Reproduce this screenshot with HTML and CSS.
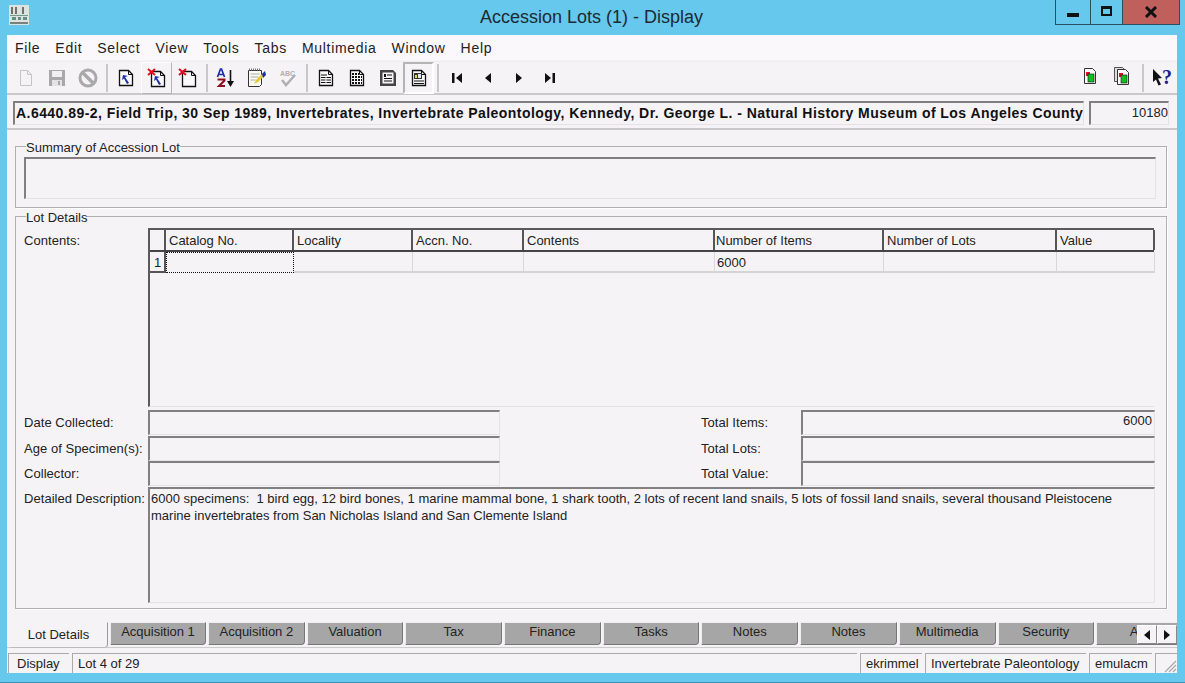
FILE: index.html
```html
<!DOCTYPE html>
<html>

<head>
  <meta charset="UTF-8">
  <title>Accession Lots (1) - Display</title>
  <link rel="stylesheet" href="styles.css">
</head>

<body>
  <header class="titlebar">
    <svg class="appicon" width="20" height="20" viewBox="0 0 20 20">
      <rect x="0" y="0" width="20" height="20" fill="#dfe3e0" />
      <rect x="2" y="2" width="2" height="7" fill="#6d7470" />
      <rect x="6" y="2" width="2" height="7" fill="#6d7470" />
      <rect x="13" y="2" width="2" height="7" fill="#6d7470" />
      <rect x="1" y="10" width="18" height="1" fill="#6f9a90" />
      <rect x="3" y="12" width="4" height="3" fill="#5f8f88" />
      <rect x="9" y="12" width="3" height="3" fill="#5f8f88" />
      <rect x="14" y="12" width="4" height="3" fill="#5f8f88" />
      <rect x="1" y="17" width="18" height="2" fill="#7a807c" />
    </svg>
    <div class="title">Accession Lots (1) - Display</div>
    <div class="winbtns">
      <div class="winbtn"><span class="glyph-min"></span></div>
      <div class="winbtn"><span class="glyph-max"></span></div>
      <div class="winbtn close">
        <svg width="14" height="12" viewBox="0 0 14 12"><path d="M2 1l10 10M12 1L2 11" stroke="#111" stroke-width="3" fill="none" /></svg>
      </div>
    </div>
  </header>

  <div class="window">
    <nav class="menubar">
      <span>File</span><span>Edit</span><span>Select</span><span>View</span><span>Tools</span><span>Tabs</span><span>Multimedia</span><span>Window</span><span>Help</span>
    </nav>

    <div class="toolbar">
      <div class="tool">
        <svg width="18" height="18" viewBox="0 0 18 18"><path d="M3.500 1.500h7l4 4v11h-11z" fill="#f6f3f7" stroke="#c4c4c4" /><path d="M10.500 1.500v4h4" fill="none" stroke="#c4c4c4" /></svg>
      </div>
      <div class="tool">
        <svg width="18" height="18" viewBox="0 0 18 18"><path d="M1 1h16v16H1z" fill="#a8a8a8" /><rect x="4" y="2" width="10" height="6" fill="#f0eef0" /><rect x="4" y="11" width="10" height="6" fill="#e4e2e4" /><rect x="10" y="12" width="2" height="4" fill="#a8a8a8" /></svg>
      </div>
      <div class="tool">
        <svg width="20" height="20" viewBox="0 0 20 20"><circle cx="10" cy="10" r="8" fill="none" stroke="#a9a9a9" stroke-width="3" /><path d="M4.500 4.500l11 11" stroke="#a9a9a9" stroke-width="3.500" /></svg>
      </div>
      <div class="sep"></div>
      <div class="tool">
        <svg width="18" height="18" viewBox="0 0 18 18"><use href="#doc" /><use href="#back" /></svg>
      </div>
      <div class="tool raised">
        <svg width="20" height="20" viewBox="0 0 20 20"><g transform="translate(2 2)"><use href="#doc" /><use href="#back" /></g><path d="M1 1l7 6M8 1L1 7" stroke="#e01020" stroke-width="2" /></svg>
      </div>
      <div class="tool">
        <svg width="20" height="20" viewBox="0 0 20 20"><g transform="translate(2 2)"><use href="#doc" /></g><path d="M1 1l7 6M8 1L1 7" stroke="#e01020" stroke-width="2" /></svg>
      </div>
      <div class="sep"></div>
      <div class="tool">
        <svg width="20" height="20" viewBox="0 0 20 20">
          <path d="M1.500 9L4.500 1h1l3 8M3 6.500h4" fill="none" stroke="#1a2fa8" stroke-width="1.700" />
          <path d="M1.500 11.500h7v1L3 18h6" fill="none" stroke="#8e1020" stroke-width="2" />
          <path d="M14.500 2v12" stroke="#111" stroke-width="1.600" /><path d="M11 13h7l-3.500 6z" fill="#111" />
        </svg>
      </div>
      <div class="tool">
        <svg width="22" height="20" viewBox="0 0 22 20">
          <path d="M2.500 2.500h13v14l-2 2h-11z" fill="#fbfbf4" stroke="#333" />
          <path d="M3 1.500h12" stroke="#777" stroke-width="2" stroke-dasharray="1 1" />
          <path d="M4.500 6h9M4.500 9h8M4.500 12h5" stroke="#aaa" />
          <path d="M8 16l2-4 8-8 2 2-8 8z" fill="#e6c832" />
          <path d="M16 6l3-3 1 4-3 3z" fill="#1a2fa8" />
        </svg>
      </div>
      <div class="tool">
        <svg width="20" height="20" viewBox="0 0 20 20">
          <text x="2" y="8" class="abc">ABC</text>
          <path d="M4 12l4 5 9-10" fill="none" stroke="#b0b0b0" stroke-width="2.500" />
        </svg>
      </div>
      <div class="sep"></div>
      <div class="tool">
        <svg width="18" height="18" viewBox="0 0 18 18"><use href="#doc" /><path d="M4 6h6M4 8.500h10M4 11h10M4 13.500h10" stroke="#111" stroke-width="1.200" /><path d="M9 8v6.500" stroke="#fafafa" /></svg>
      </div>
      <div class="tool">
        <svg width="18" height="18" viewBox="0 0 18 18"><use href="#doc" /><path d="M4 5h7M4 8h10M4 11h10M4 14h10" stroke="#111" stroke-width="2" stroke-dasharray="2 1" /></svg>
      </div>
      <div class="tool">
        <svg width="18" height="18" viewBox="0 0 18 18"><path d="M1 1h13l3 3v13H1z" fill="#444" /><rect x="3.500" y="3.500" width="11" height="11" fill="#f6f3f7" /><path d="M8 6h5M5 9.500h8M5 12h8" stroke="#111" stroke-width="1.200" /><rect x="5" y="5" width="2" height="3" fill="#111" /></svg>
      </div>
      <div class="tool pressed">
        <svg width="18" height="18" viewBox="0 0 18 18"><use href="#doc" /><rect x="4" y="4" width="8" height="6" fill="#333" /><rect x="5" y="6" width="2" height="3" fill="#e8d840" /><rect x="8" y="5" width="3" height="4" fill="#dfe8f0" /><path d="M4 12h10M4 14.500h10" stroke="#111" stroke-width="1.200" /></svg>
      </div>
      <div class="sep"></div>
      <div class="tool"><svg width="12" height="12" viewBox="0 0 12 12"><path d="M1 1h2.500v10H1zM11 1v10L5 6z" fill="#111" /></svg></div>
      <div class="tool"><svg width="12" height="12" viewBox="0 0 12 12"><path d="M9 1v10L3 6z" fill="#111" /></svg></div>
      <div class="tool"><svg width="12" height="12" viewBox="0 0 12 12"><path d="M3 1v10l6-5z" fill="#111" /></svg></div>
      <div class="tool"><svg width="12" height="12" viewBox="0 0 12 12"><path d="M1 1v10l6-5zM8.500 1H11v10H8.500z" fill="#111" /></svg></div>

      <div class="tool right lifted">
        <svg width="18" height="18" viewBox="0 0 18 18"><use href="#sheet" /></svg>
      </div>
      <div class="tool lifted">
        <svg width="20" height="20" viewBox="0 0 20 20"><path d="M2.500 1.500h8l3 3v11h-11z" fill="#ddd" stroke="#555" /><g transform="translate(3 2)"><use href="#sheet" /></g></svg>
      </div>
      <div class="sep"></div>
      <div class="tool">
        <svg width="24" height="22" viewBox="0 0 24 22">
          <path d="M3 2l9 9-4 .5 3 6-2.500 1-2.500-6L3 15z" fill="#111" />
          <text x="12" y="17" class="help-q">?</text>
        </svg>
      </div>
    </div>

    <div class="recordline">
      <div class="field recordname">A.6440.89-2, Field Trip, 30 Sep 1989, Invertebrates, Invertebrate Paleontology, Kennedy, Dr. George L. - Natural History Museum of Los Angeles County</div>
      <div class="field recordid">10180</div>
    </div>

    <main class="content">
      <fieldset class="group summary">
        <legend>Summary of Accession Lot</legend>
        <div class="field summarybox"></div>
      </fieldset>

      <fieldset class="group details">
        <legend>Lot Details</legend>
        <div class="contents-row">
          <label>Contents:</label>
          <div class="gridbox">
            <div class="gridhead">
              <div class="corner"></div>
              <div class="c1">Catalog No.</div>
              <div class="c2">Locality</div>
              <div class="c3">Accn. No.</div>
              <div class="c4">Contents</div>
              <div class="c5">Number of Items</div>
              <div class="c6">Number of Lots</div>
              <div class="c7">Value</div>
            </div>
            <div class="gridrow">
              <div class="corner">1</div>
              <div class="c1 current"></div>
              <div class="c2"></div>
              <div class="c3"></div>
              <div class="c4"></div>
              <div class="c5">6000</div>
              <div class="c6"></div>
              <div class="c7"></div>
            </div>
          </div>
        </div>

        <div class="pairs">
          <label>Date Collected:</label>
          <div class="field"></div>
          <label class="rlabel">Total Items:</label>
          <div class="field num">6000</div>

          <label>Age of Specimen(s):</label>
          <div class="field"></div>
          <label class="rlabel">Total Lots:</label>
          <div class="field num"></div>

          <label>Collector:</label>
          <div class="field"></div>
          <label class="rlabel">Total Value:</label>
          <div class="field num"></div>
        </div>

        <div class="desc-row">
          <label>Detailed Description:</label>
          <div class="field desc">6000 specimens:&nbsp; 1 bird egg, 12 bird bones, 1 marine mammal bone, 1 shark tooth, 2 lots of recent land snails, 5 lots of fossil land snails, several thousand Pleistocene marine invertebrates from San Nicholas Island and San Clemente Island</div>
        </div>
      </fieldset>
    </main>

    <div class="tabs">
      <div class="tab active">Lot Details</div>
      <div class="tab first">Acquisition 1</div>
      <div class="tab">Acquisition 2</div>
      <div class="tab">Valuation</div>
      <div class="tab">Tax</div>
      <div class="tab">Finance</div>
      <div class="tab">Tasks</div>
      <div class="tab">Notes</div>
      <div class="tab">Notes</div>
      <div class="tab">Multimedia</div>
      <div class="tab">Security</div>
      <div class="tab">Audit</div>
      <div class="tabscroll">
        <div><svg width="6" height="10" viewBox="0 0 6 10"><path d="M6 0v10L0 5z" fill="#111" /></svg></div>
        <div><svg width="6" height="10" viewBox="0 0 6 10"><path d="M0 0v10l6-5z" fill="#111" /></svg></div>
      </div>
    </div>

    <footer class="statusbar">
      <div class="cell mode">Display</div>
      <div class="cell lot">Lot 4 of 29</div>
      <div class="cell user">ekrimmel</div>
      <div class="cell dept">Invertebrate Paleontology</div>
      <div class="cell db">emulacm</div>
      <div class="cell grip">
        <svg width="14" height="14" viewBox="0 0 14 14"><path d="M13 2L2 13M13 6l-7 7M13 10l-3 3" stroke="#a8a8a8" stroke-width="1.200" /></svg>
      </div>
    </footer>
  </div>

  <svg class="defs" width="0" height="0">
    <defs>
      <g id="doc">
        <path d="M2.500 1.500h9l4 4v11h-13z" fill="#fafafa" stroke="#111" stroke-width="1.300" />
        <path d="M11.500 1.500v4h4" fill="none" stroke="#111" />
      </g>
      <path id="back" d="M12 14L8 8l3-1-5-1-1 5 2-1.500 3 5.500z" fill="#1a2fa8" />
      <g id="sheet">
        <path d="M2.500 1.500h8l3 3v12h-11z" fill="#fafafa" stroke="#333" />
        <rect x="4" y="5" width="4" height="4" fill="#e01020" />
        <rect x="6" y="7" width="6" height="8" fill="#10c020" stroke="#111" stroke-width=".6" />
      </g>
    </defs>
  </svg>
</body>

</html>
```
FILE: styles.css
```css
html,
body {
  margin: 0;
  height: 683px;
  overflow: hidden;
}

body {
  background-color: #66c8ec;
  font-family: "Liberation Sans", Arial, sans-serif;
  font-size: 13px;
  color: #222;
  box-sizing: border-box;
  border-bottom: 1px solid #3f8fae;
}

.titlebar {
  display: flex;
  height: 35px;
  position: relative;
}

.appicon {
  margin: 5px 0 0 9px;
}

.title {
  position: absolute;
  left: 480px;
  top: 7px;
  font-size: 18px;
  color: #1d2a33;
}

.winbtns {
  display: flex;
  margin-left: auto;
  margin-right: 5px;
  height: 24px;
  border: 1px solid #2a4f60;
  border-top: 0;
}

.winbtn {
  width: 31px;
  display: flex;
  align-items: center;
  justify-content: center;
  border-left: 1px solid #2a4f60;
}

.winbtn:first-child {
  width: 34px;
  border-left: 0;
}

.winbtn.close {
  width: 56px;
  background-color: #c0605c;
}

.glyph-min {
  display: block;
  width: 12px;
  height: 4px;
  margin-top: 6px;
  background-color: #111;
}

.glyph-max {
  display: block;
  width: 7px;
  height: 5px;
  border: 2px solid #111;
  border-top-width: 3px;
  margin-bottom: 3px;
}

.window {
  margin: 0 8px 0 7px;
  height: 638px;
  background-color: #f6f3f7;
  display: flex;
  flex-direction: column;
}

.menubar {
  display: flex;
  gap: 15px;
  height: 25px;
  padding: 0 0 0 8px;
  align-items: center;
  font-size: 14px;
  letter-spacing: .7px;
  background-color: #faf8fa;
  margin-bottom: 1px;
}

.toolbar {
  display: flex;
  align-items: center;
  height: 34px;
  padding-left: 3px;
  border-top: 1px solid #eee;
  border-bottom: 2px solid #c9c9c9;
  box-sizing: border-box;
}

.tool {
  width: 31px;
  height: 32px;
  display: flex;
  align-items: center;
  justify-content: center;
  box-sizing: border-box;
}

.tool svg {
  overflow: visible;
}

.tool.raised {
  border: 1px solid;
  border-color: #fff #b4b4b4 #b4b4b4 #fff;
}

.tool.pressed {
  border: 2px solid;
  border-color: #b4b4b4 #fff #fff #b4b4b4;
}

.tool.right {
  margin-left: auto;
}

.tool.lifted {
  padding: 0 3px 4px 0;
}

.sep {
  width: 2px;
  height: 28px;
  margin: 0 2px 0 3px;
  background-color: #c8c8c8;
}

.abc {
  font-size: 7px;
  font-weight: bold;
  fill: #b0b0b0;
}

.help-q {
  font-family: "Liberation Serif", serif;
  font-size: 20px;
  font-weight: bold;
  fill: #1a2090;
}

.field {
  box-sizing: border-box;
  border-style: solid;
  border-width: 2px 1px 1px 2px;
  border-color: #808080 #e4e2e4 #e4e2e4 #808080;
}

.recordline {
  display: flex;
  gap: 5px;
  height: 27px;
  margin: 1px 0 0;
  padding: 5px 8px 0 6px;
  border-bottom: 2px solid #c9c9c9;
}

.recordname {
  width: 1071px;
  height: 24px;
  padding: 2px 0 0 1px;
  font-weight: bold;
  font-size: 14px;
  white-space: nowrap;
  overflow: hidden;
  letter-spacing: .45px;
  color: #111;
}

.recordid {
  width: 80px;
  height: 24px;
  padding: 2px 0 0 0;
  text-align: right;
}

.content {
  flex: 1;
  padding: 7px 10px 0 8px;
  display: flex;
  flex-direction: column;
  gap: 0;
}

.group {
  margin: 0;
  padding: 0;
  border: 1px solid #b0b0b0;
  box-shadow: 1px 1px 0 #fff;
  min-width: 0;
  box-sizing: border-box;
}

.group legend {
  margin-left: 2px;
  padding: 3px 0 0;
  line-height: 15px;
}

.summary {
  height: 71px;
  flex: none;
  padding: 2px 10px 0 8px;
}

.summarybox {
  height: 42px;
}

.details {
  height: 402px;
  flex: none;
  margin-top: -1px;
  padding: 3px 11px 0 8px;
}

label {
  white-space: nowrap;
  letter-spacing: .05px;
}

.contents-row {
  display: grid;
  grid-template-columns: 124px 1006px;
  height: 179px;
}

.contents-row label {
  padding-top: 5px;
}

.gridbox {
  box-sizing: border-box;
  height: 179px;
  border-style: solid;
  border-width: 2px 0 0 2px;
  border-color: #5a5a5a #e4e2e4 #e4e2e4 #5a5a5a;
  border-bottom: 1px solid #e4e2e4;
}

.gridhead,
.gridrow {
  display: grid;
  grid-template-columns: 16px 128px 119px 111px 191px 169px 173px 98px;
}

.gridhead {
  box-sizing: border-box;
  height: 22px;
  border-bottom: 2px solid #444;
}

.gridhead > div {
  padding: 3px 0 0 3px;
  border-right: 2px solid #555;
  box-sizing: border-box;
  white-space: nowrap;
}

.gridhead .c5 {
  padding-left: 1px;
}

.gridrow {
  height: 21px;
}

.gridrow > div {
  padding: 3px 0 0 2px;
  border-right: 1px solid #d8d8d8;
  border-bottom: 2px solid #d4d4d4;
  box-sizing: border-box;
}

.gridrow .corner {
  border-right: 2px solid #555;
  border-bottom: 2px solid #555;
  padding-left: 4px;
}

.gridrow .current {
  border: 1px dotted #111;
}

.pairs {
  display: grid;
  grid-template-columns: 124px 352px 301px 354px;
  grid-auto-rows: 25.500px;
  margin-top: 3px;
}

.pairs label {
  padding-top: 5px;
}

.pairs .rlabel {
  padding-left: 201px;
}

.pairs .field {
  height: 25px;
}

.pairs .num {
  text-align: right;
  padding: 1px 2px 0 0;
}

.desc-row {
  display: grid;
  grid-template-columns: 124px 1007px;
}

.desc-row label {
  padding-top: 4px;
}

.desc {
  height: 116px;
  padding: 1px 30px 0 1px;
  line-height: 17px;
}

.tabs {
  display: flex;
  position: relative;
  overflow: hidden;
  height: 30px;
  padding-left: 2px;
  gap: 2px;
  box-sizing: border-box;
  background: linear-gradient(#ccc, #ccc) 0 25px / 100% 1px no-repeat;
}

.tab {
  flex: none;
  width: 96.700px;
  height: 23px;
  padding-top: 1px;
  box-sizing: border-box;
  background-color: #a6a6a6;
  border: 1px solid;
  border-color: #eee #777 #777 #eee;
  border-radius: 0 0 4px 0;
  text-align: center;
  color: #222;
}

.tab.first {
  width: 96px;
}

.tab.active {
  width: 99px;
  height: 26px;
  padding-top: 4px;
  background-color: #f6f3f7;
  border-color: transparent #999 #bbb transparent;
}

.tabscroll {
  position: absolute;
  right: 0;
  top: 3px;
  display: flex;
}

.tabscroll div {
  width: 20px;
  height: 19px;
  background-color: #f6f3f7;
  border: 1px solid;
  border-color: #fff #888 #888 #fff;
  box-sizing: border-box;
  display: flex;
  align-items: center;
  justify-content: center;
}

.statusbar {
  display: flex;
  align-items: flex-end;
  height: 21px;
  padding: 0 0 0 1px;
  gap: 3px;
  background-color: #f6f3f7;
}

.cell {
  box-sizing: border-box;
  height: 20px;
  padding: 2px 0 0 5px;
  border-style: solid;
  border-width: 1px 0 0 1px;
  border-color: #aaa;
  white-space: nowrap;
}

.mode {
  width: 61px;
  padding-left: 8px;
}

.lot {
  width: 785px;
}

.user {
  width: 62px;
}

.dept {
  width: 161px;
}

.db {
  width: 63px;
}

.grip {
  width: 22px;
  padding: 5px 0 0 7px;
}

.defs {
  position: absolute;
}
```
